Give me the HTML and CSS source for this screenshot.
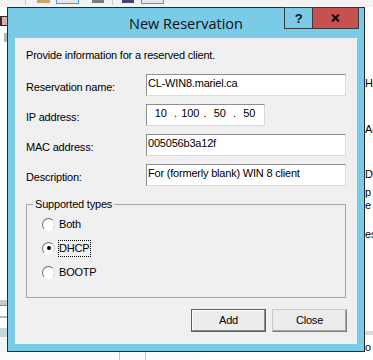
FILE: index.html
```html
<!DOCTYPE html>
<html lang="en">
<head>
  <meta charset="UTF-8" />
  <title>New Reservation</title>
  <link rel="stylesheet" href="styles.css">
</head>
<body>
  <div class="console">
    <div class="toolbar">
      <span class="tb-sep"></span>
      <span class="tb-icon tan"></span>
      <span class="tb-icon framed"></span>
      <span class="tb-icon grey"></span>
      <span class="tb-sep second"></span>
      <span class="tb-icon navy"></span>
      <span class="tb-icon framed last"></span>
    </div>
    <div class="main">
      <div class="tree">
        <span class="tree-icon"></span>
        <span class="tree-mark"></span>
        <div class="tree-bottom">
          <div class="bar-tab"></div>
          <div class="bar-line"></div>
          <div class="bar-gap"></div>
          <div class="bar-thin"></div>
          <div class="bar-gap"></div>
          <div class="bar-sel"></div>
          <div class="bar-light"></div>
          <div class="list-head">
            <span class="col first"></span>
            <span class="col second"></span>
            <span class="col"></span>
          </div>
        </div>
      </div>
      <div class="details">
        <span class="line l1">H</span>
        <span class="line l2">Ac</span>
        <span class="line l3">D</span>
        <span class="line l4">p</span>
        <span class="line l5">e</span>
        <span class="line l6">es</span>
        <div class="band"></div>
        <span class="line l7">o</span>
      </div>
    </div>
  </div>

  <div class="dialog">
    <div class="caption">
      <span class="caption-title">New Reservation</span>
      <div class="caption-buttons">
        <span class="cap-btn help">?</span>
        <span class="cap-btn close">
          <svg width="9" height="8" viewBox="0 0 9 8"><path d="M1 0.5 L8 7.5 M8 0.5 L1 7.5" stroke="#111" stroke-width="2.2" fill="none"/></svg>
        </span>
      </div>
    </div>
    <div class="dialog-body">
      <p class="intro">Provide information for a reserved client.</p>
      <div class="form">
        <label for="res-name">Reservation name:</label>
        <input type="text" id="res-name" class="field" value="CL-WIN8.mariel.ca">
        <label>IP address:</label>
        <div class="field ip">
          <span class="octet">10</span><span class="dot">.</span>
          <span class="octet">100</span><span class="dot">.</span>
          <span class="octet">50</span><span class="dot">.</span>
          <span class="octet">50</span>
        </div>
        <label for="mac">MAC address:</label>
        <input type="text" id="mac" class="field" value="005056b3a12f">
        <label for="desc">Description:</label>
        <input type="text" id="desc" class="field" value="For (formerly blank) WIN 8 client">
      </div>
      <fieldset class="types">
        <legend>Supported types</legend>
        <div class="radios">
          <div class="radio"><span class="circle"></span><span class="radio-label">Both</span></div>
          <div class="radio checked"><span class="circle"></span><span class="radio-label focus">DHCP</span></div>
          <div class="radio"><span class="circle"></span><span class="radio-label">BOOTP</span></div>
        </div>
      </fieldset>
      <div class="actions">
        <button class="btn default">Add</button>
        <button class="btn">Close</button>
      </div>
    </div>
  </div>
</body>
</html>
```

FILE: styles.css
```css
html, body {
  margin: 0;
  padding: 0;
}
body {
  width: 373px;
  height: 360px;
  overflow: hidden;
  position: relative;
  background: #fff;
  font-family: 'Liberation Sans', Arial, sans-serif;
  font-size: 11px;
  letter-spacing: -0.2px;
  color: #000;
}

/* console window behind the dialog */
.console {
  display: grid;
  grid-template-rows: 7px 1fr;
  height: 360px;
}
.toolbar {
  display: flex;
  align-items: flex-start;
  background: #f3f3f3;
}
.tb-sep {
  margin-left: 25px;
  width: 1px;
  height: 5px;
  background: #c9c9c9;
}
.tb-sep.second {
  margin-left: 8px;
}
.tb-icon {
  height: 3px;
}
.tb-icon.tan {
  margin-left: 11px;
  width: 13px;
  background: #c8a56b;
}
.tb-icon.framed {
  margin-left: 6px;
  width: 21px;
  height: 3px;
  border: 1px solid #4a9be0;
  border-top: none;
  background: #e4e8ee;
}
.tb-icon.framed.last {
  margin-left: 7px;
}
.tb-icon.grey {
  margin-left: 13px;
  width: 12px;
  background: #7c7c7c;
}
.tb-icon.navy {
  margin-left: 9px;
  width: 12px;
  background: #3b4a6b;
}
.main {
  display: flex;
  overflow: hidden;
}
.tree {
  width: 200px;
  display: flex;
  flex-direction: column;
}
.tree-icon {
  margin-top: 9px;
  width: 5px;
  height: 8px;
  border: 1px solid #3a2a2a;
  border-left-width: 2px;
  border-right: none;
  background: #d9b0a8;
}
.tree-mark {
  margin: 7px 0 0 4px;
  width: 3px;
  height: 9px;
  background: #b4b4b4;
}
.tree-bottom {
  margin-top: auto;
  display: flex;
  flex-direction: column;
}
.bar-tab { height: 5px; background: #cacaca; }
.bar-line { height: 1px; background: #8a8a8a; }
.bar-gap { height: 10px; background: #fff; }
.bar-thin { height: 2px; background: #b9b9b9; }
.bar-sel { height: 9px; background: #c8d6de; }
.bar-light { height: 15px; background: #f4f4f4; }
.list-head {
  display: flex;
  height: 8px;
  background: #fbfbfb;
}
.col {
  flex: 1;
}
.col.first {
  flex: 0 0 119px;
  border-right: 1px solid #c4c4c4;
}
.col.second {
  flex: 0 0 25px;
  border-right: 1px solid #c4c4c4;
}
.details {
  flex: 1;
  display: flex;
  flex-direction: column;
  padding-left: 165px;
  overflow: hidden;
}
.line {
  line-height: 13px;
  white-space: nowrap;
}
.l1 { margin-top: 70px; }
.l2 { margin-top: 33px; }
.l3 { margin-top: 32px; }
.l4 { margin-top: 5px; }
.l6 { margin-top: 16px; }
.band {
  margin-top: 90px;
  height: 4px;
  background: #d8d8d8;
}
.l7 { margin-top: 6px; }

/* dialog */
.dialog {
  position: absolute;
  left: 7px;
  top: 7px;
  width: 358px;
  height: 345px;
  box-sizing: border-box;
  border: 1px solid #2a2a2a;
  background: #7acbe8;
  padding: 0 7px 7px;
}
.caption {
  height: 30px;
  display: flex;
  align-items: center;
  justify-content: center;
}
.caption-title {
  font-family: 'Open Sans', 'Noto Sans', sans-serif;
  font-size: 14.5px;
  letter-spacing: 0;
  color: #111;
  margin-top: 1px;
}
.caption-buttons {
  position: absolute;
  top: -1px;
  right: 5px;
  display: flex;
  height: 22px;
  box-sizing: border-box;
  border: 1px solid #3a3a3a;
}
.cap-btn {
  display: flex;
  align-items: center;
  justify-content: center;
}
.cap-btn.help {
  width: 27px;
  font-weight: bold;
  font-size: 13px;
  color: #111;
}
.cap-btn.close {
  width: 45px;
  border-left: 1px solid #3a3a3a;
  background: #c75050;
}
.dialog-body {
  height: 306px;
  box-sizing: border-box;
  background: #f0f0f0;
  padding: 0 11px;
}
.intro {
  margin: 0;
  padding-top: 10px;
  line-height: 14px;
}
.form {
  margin-top: 12px;
  display: grid;
  grid-template-columns: 120px 200px;
  grid-auto-rows: 22px;
  row-gap: 8px;
}
.form label {
  line-height: 14px;
  padding-top: 6px;
}
.field {
  box-sizing: border-box;
  height: 22px;
  margin: 0;
  padding: 0 0 5px 1px;
  border: 1px solid;
  border-color: #8e8e8e #dadada #dadada #8e8e8e;
  background: #fff;
  font-family: 'Liberation Sans', Arial, sans-serif;
  font-size: 11px;
  letter-spacing: -0.2px;
  color: #000;
  outline: none;
}
.field.ip {
  width: 119px;
  display: flex;
  align-items: center;
  padding: 0 0 5px 2px;
  line-height: 14px;
}
.octet {
  width: 23.5px;
  text-align: center;
}
.dot {
  width: 6px;
  text-align: center;
}
.types {
  margin: 11px 0 0;
  padding: 0;
  min-inline-size: 0;
  border: 1px solid #a6a6a6;
}
.types legend {
  margin-left: 6px;
  padding: 0 2px;
  line-height: 14px;
}
.radios {
  display: flex;
  flex-direction: column;
  gap: 8px;
  padding: 5px 0 17px 15px;
}
.radio {
  display: flex;
  align-items: center;
  height: 16px;
}
.circle {
  width: 13px;
  height: 13px;
  box-sizing: border-box;
  border-radius: 50%;
  border: 1px solid;
  border-color: #6f6f6f #d8d8d8 #fff #6f6f6f;
  background: #fff;
  display: flex;
  align-items: center;
  justify-content: center;
}
.radio.checked .circle::after {
  content: '';
  width: 4px;
  height: 4px;
  border-radius: 50%;
  background: #000;
}
.radio-label {
  margin-left: 3px;
  padding: 0 1px 0 0;
  line-height: 15px;
  border: 1px solid transparent;
}
.radio-label.focus {
  border: 1px dotted #000;
}
.actions {
  margin-top: 11px;
  display: flex;
  justify-content: flex-end;
  gap: 6px;
  margin-right: -1px;
}
.btn {
  width: 75px;
  height: 23px;
  margin: 0;
  padding: 0 0 2px;
  box-sizing: border-box;
  border: 1px solid;
  border-color: #c8c8c8 #7d7d7d #7d7d7d #c8c8c8;
  box-shadow: inset -1px -1px 0 #a8a8a8;
  background: #ececec;
  font-family: 'Liberation Sans', Arial, sans-serif;
  font-size: 11px;
  letter-spacing: -0.2px;
  color: #000;
}
.btn.default {
  border-color: #5f5f5f;
  box-shadow: inset -1px -1px 0 #8a8a8a, inset 1px 1px 0 #fff;
}
```
